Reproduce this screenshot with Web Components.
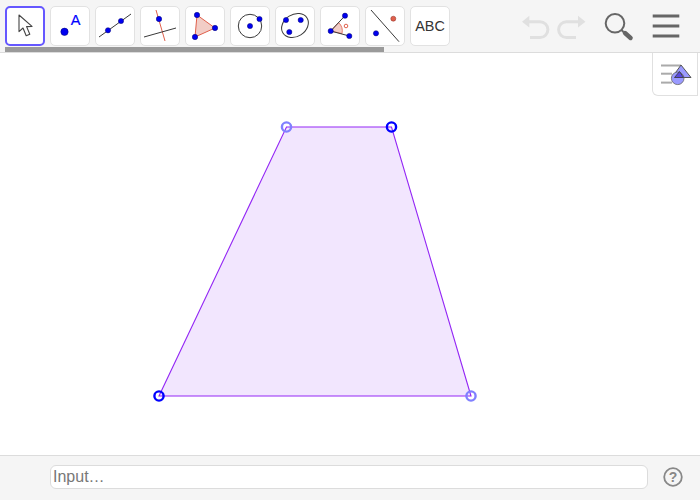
<!DOCTYPE html>
<html lang="en">
<head>
<meta charset="utf-8">
<title>Trapezoid</title>
<style>
html,body{margin:0;padding:0;background:#fff}
body{width:700px;height:500px;overflow:hidden;font-family:"Liberation Sans",Arial,sans-serif}
</style>
</head>
<body>
<ggb-app>
  <ggb-toolbar slot="top">
    <ggb-tool icon="move" selected></ggb-tool>
    <ggb-tool icon="point"></ggb-tool>
    <ggb-tool icon="line"></ggb-tool>
    <ggb-tool icon="perp"></ggb-tool>
    <ggb-tool icon="polygon"></ggb-tool>
    <ggb-tool icon="circle"></ggb-tool>
    <ggb-tool icon="conic"></ggb-tool>
    <ggb-tool icon="angle"></ggb-tool>
    <ggb-tool icon="mirror"></ggb-tool>
    <ggb-tool icon="text"></ggb-tool>
  </ggb-toolbar>
  <ggb-canvas slot="main"></ggb-canvas>
  <ggb-inputbar slot="bottom"></ggb-inputbar>
</ggb-app>
<script>
const BLUE='#0000f0', RED='#e0604c', DARK='#3a3a3a';
const dot=(x,y,r=3,f=BLUE)=>`<circle cx="${x}" cy="${y}" r="${r}" fill="${f}" stroke="#00006e" stroke-width=".5"/>`;
const seg=(a,b,c,d,s=DARK,w=1)=>`<line x1="${a}" y1="${b}" x2="${c}" y2="${d}" stroke="${s}" stroke-width="${w}"/>`;
const ICONS={
  move:`<path d="M14 9 L14 25.6 L18 22 L21.2 29.8 L24.8 28.2 L21.6 20.6 L27 20.4 Z" fill="#fff" stroke="#444" stroke-width="1.1" stroke-linejoin="round"/>`,
  point:`${dot(14.5,25.8,3.7)}<text x="25.7" y="19.2" font-size="14.5" fill="#0000ff" stroke="#0000ff" stroke-width=".2" text-anchor="middle" font-family="Liberation Sans">A</text>`,
  line:`${seg(4,31,36,8)}${dot(13,24.3,2.6)}${dot(26,15,2.6)}`,
  perp:`${seg(16,4,25,35,RED)}${seg(4,31,36,22)}${dot(19,13,2.7)}`,
  polygon:`<path d="M12 9 L30 22 L10 31 Z" fill="#f2cdc6" stroke="${RED}" stroke-width="1"/>${dot(12,9,2.7)}${dot(30,22,2.7)}${dot(10,31,2.7)}`,
  circle:`<circle cx="20" cy="20" r="11.7" fill="none" stroke="${DARK}"/>${dot(20,20,2.6)}${dot(29.5,13,2.6)}`,
  conic:`<ellipse cx="20" cy="19.5" rx="14.2" ry="11" transform="rotate(-32 20 19.5)" fill="none" stroke="${DARK}"/>${dot(11,14,2.6)}${dot(25.7,14,2.6)}${dot(14.3,26,2.6)}`,
  angle:`<path d="M10.7 25 L18.6 16.6 A11.5 11.5 0 0 1 22 27.6 Z" fill="#f2cdc6" stroke="${RED}" stroke-width=".8"/>${seg(10.7,25,25,9.7)}${seg(10.7,25,29.3,30)}${dot(10.7,25,2.6)}${dot(25,9.7,2.6)}${dot(29.3,30,2.6)}<circle cx="26" cy="20" r="1.8" fill="none" stroke="${RED}"/>`,
  mirror:`${seg(6,4,34,35.7)}${dot(11,27.3,2.6)}<circle cx="28.3" cy="12.7" r="2.5" fill="${RED}" stroke="#8a2a20" stroke-width=".5"/>`,
  text:`<text x="20" y="25.3" font-size="14.4" fill="#333" text-anchor="middle" font-family="Liberation Sans">ABC</text>`
};

customElements.define('ggb-app',class extends HTMLElement{
  constructor(){super();this.attachShadow({mode:'open'}).innerHTML=`<style>
    :host{display:flex;flex-direction:column;width:700px;height:500px;overflow:hidden}
    .main{flex:1;display:flex;min-height:0}
  </style><slot name="top"></slot><div class="main"><slot name="main"></slot></div><slot name="bottom"></slot>`;}
});

customElements.define('ggb-toolbar',class extends HTMLElement{
  constructor(){super();this.attachShadow({mode:'open'}).innerHTML=`<style>
    :host{display:block;background:#f5f5f5;border-bottom:1px solid #dcdcdc;padding:6px 0 0 5px;height:46px;position:relative}
    .tools{display:flex;gap:5px}
    .scroll{width:379px;height:5px;background:#9a9a9a;margin-top:1px}
    .actions{position:absolute;left:515px;top:0;width:180px;height:52px}
    svg{display:block}
  </style>
  <div class="tools"><slot></slot></div>
  <div class="scroll"></div>
  <div class="actions">
    <svg width="180" height="52" viewBox="515 0 180 52" fill="none">
      <path d="M522 21.7 L529.3 15.7 L529.3 27.4 Z" fill="#e0e0e0"/>
      <path d="M528 21.7 H540 A7.9 7.9 0 0 1 540 37.5 H530" stroke="#e0e0e0" stroke-width="3"/>
      <path d="M585.5 21.7 L578 15.7 L578 27.4 Z" fill="#e0e0e0"/>
      <path d="M579 21.7 H566.5 A7.9 7.9 0 0 0 566.5 37.5 H576" stroke="#e0e0e0" stroke-width="3"/>
      <circle cx="615" cy="23.3" r="9.3" stroke="#666" stroke-width="2"/>
      <line x1="621.5" y1="30" x2="623.5" y2="32" stroke="#666" stroke-width="2"/>
      <line x1="625" y1="33" x2="630.6" y2="38" stroke="#666" stroke-width="4.4" stroke-linecap="round"/>
      <g fill="#666">
        <rect x="652.7" y="14.5" width="26.6" height="3"/>
        <rect x="652.7" y="24.5" width="26.6" height="3"/>
        <rect x="652.7" y="34.5" width="26.6" height="3"/>
      </g>
    </svg>
  </div>`;}
});

customElements.define('ggb-tool',class extends HTMLElement{
  connectedCallback(){
    const sel=this.hasAttribute('selected');
    this.shadowRoot||this.attachShadow({mode:'open'});
    this.shadowRoot.innerHTML=`<style>
      :host{display:block;width:40px;height:40px;box-sizing:border-box;background:#fff;border-radius:5px;
        border:${sel?'2px solid #6557ff':'1px solid #e2e2e2'};position:relative}
      svg{position:absolute;left:${sel?-2:-1}px;top:${sel?-2:-1}px}
    </style><svg width="40" height="40" viewBox="0 0 40 40">${ICONS[this.getAttribute('icon')]}</svg>`;
  }
});

customElements.define('ggb-canvas',class extends HTMLElement{
  constructor(){super();this.attachShadow({mode:'open'}).innerHTML=`<style>
    :host{display:block;flex:1;position:relative;background:#fff}
    svg{display:block;position:absolute;left:0;top:0}
    .panel{position:absolute;right:2px;top:0;width:46px;height:43px;box-sizing:border-box;background:#fff;
      border:1px solid #e0e0e0;border-top:0;border-radius:0 0 0 6px}
    .panel svg{left:-1px}
  </style>
  <svg width="700" height="402" viewBox="0 53 700 402">
    <path d="M286.5 127 L391.5 127 L471 396 L159 396 Z" fill="#f2e6fe" stroke="#9326f5" stroke-width="1.1"/>
    <g fill="none" stroke-width="2.4">
      <circle cx="286.5" cy="127" r="4.6" stroke="#8080ff"/>
      <circle cx="391.5" cy="127" r="4.6" stroke="#0000ff"/>
      <circle cx="471" cy="396" r="4.6" stroke="#8080ff"/>
      <circle cx="159" cy="396" r="4.6" stroke="#0000ff"/>
    </g>
  </svg>
  <div class="panel">
    <svg width="46" height="43" viewBox="652 53 46 43">
      <g fill="#aaa">
        <rect x="661" y="64.5" width="20" height="2"/>
        <rect x="661" y="72.7" width="11" height="2"/>
        <rect x="661" y="81.6" width="11" height="2"/>
      </g>
      <path d="M681 65 L691 77.5 L672 77.5 Z" fill="#9a9aff" stroke="#555" stroke-width="1"/>
      <circle cx="677.7" cy="78.3" r="6.3" fill="#9a9aff" stroke="#666" stroke-width=".8"/>
      <path d="M679.5 71.5 L683.5 77.5 L674.5 77.5 Z" fill="#5a4ae0" stroke="#333" stroke-width=".8"/>
    </svg>
  </div>`;}
});

customElements.define('ggb-inputbar',class extends HTMLElement{
  constructor(){super();this.attachShadow({mode:'open'}).innerHTML=`<style>
    :host{display:flex;align-items:flex-start;box-sizing:border-box;height:45px;background:#f5f5f5;border-top:1px solid #dcdcdc;padding:9px 0 0 50px;gap:15px}
    .input{width:598px;height:24px;box-sizing:border-box;background:#fff;border:1px solid #dcdcdc;border-radius:6px;
      font:16px/22px "Liberation Sans",Arial,sans-serif;color:#777;padding-left:2px}
    svg{display:block;margin-top:2px}
  </style>
  <div class="input">Input…</div>
  <svg width="20" height="20" viewBox="0 0 20 20">
    <circle cx="10" cy="10" r="8.8" fill="none" stroke="#888" stroke-width="1.8"/>
    <text x="10" y="15" font-size="14" font-weight="bold" fill="#888" text-anchor="middle" font-family="Liberation Sans">?</text>
  </svg>`;}
});
</script>
</body>
</html>
